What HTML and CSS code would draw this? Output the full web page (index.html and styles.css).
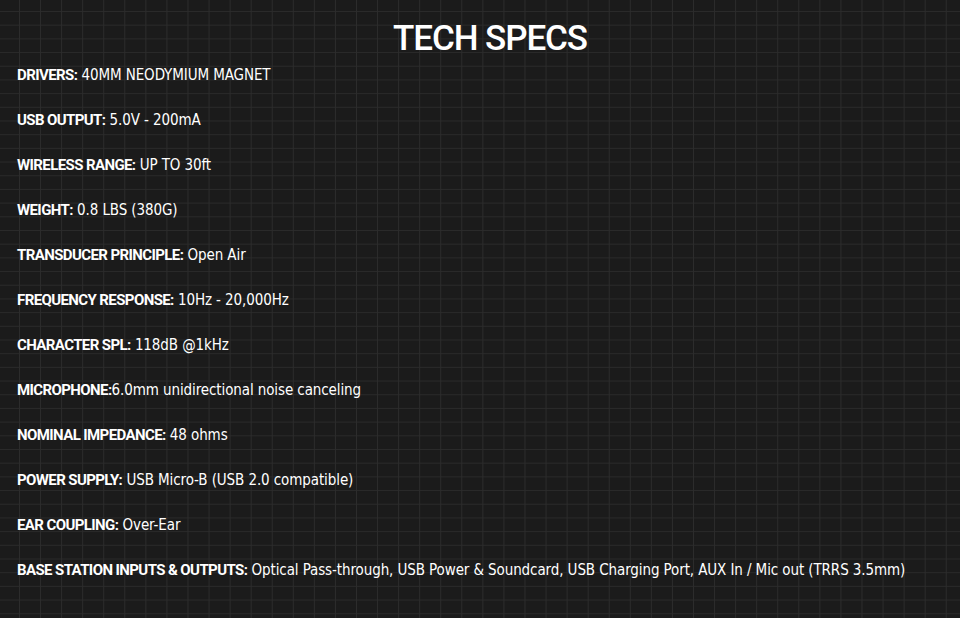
FILE: index.html
```html
<!DOCTYPE html>
<html>
<head>
<meta charset="utf-8">
<link rel="stylesheet" href="styles.css">
</head>
<body>
<main class="specs">
  <h1 class="title">TECH SPECS</h1>
  <ul class="list">
    <li><b>DRIVERS:</b> 40MM NEODYMIUM MAGNET</li>
    <li><b>USB OUTPUT:</b> 5.0V - 200mA</li>
    <li><b>WIRELESS RANGE:</b> UP TO 30ft</li>
    <li><b>WEIGHT:</b> 0.8 LBS (380G)</li>
    <li><b>TRANSDUCER PRINCIPLE:</b> Open Air</li>
    <li><b>FREQUENCY RESPONSE:</b> 10Hz - 20,000Hz</li>
    <li><b>CHARACTER SPL:</b> 118dB @1kHz</li>
    <li><b>MICROPHONE:</b>6.0mm unidirectional noise canceling</li>
    <li><b>NOMINAL IMPEDANCE:</b> 48 ohms</li>
    <li><b>POWER SUPPLY:</b> USB Micro-B (USB 2.0 compatible)</li>
    <li><b>EAR COUPLING:</b> Over-Ear</li>
    <li><b>BASE STATION INPUTS &amp; OUTPUTS:</b> Optical Pass-through, USB Power &amp; Soundcard, USB Charging Port, AUX In / Mic out (TRRS 3.5mm)</li>
  </ul>
</main>
</body>
</html>
```
FILE: styles.css
```css
html, body {
  margin: 0;
  padding: 0;
}
body {
  width: 960px;
  height: 618px;
  overflow: hidden;
  background-color: #1b1b1b;
  background-image:
    linear-gradient(to right, #2c2c2c 0, #2c2c2c 1px, transparent 1px),
    linear-gradient(to bottom, #2a2a2a 0, #2a2a2a 1px, transparent 1px);
  background-size: 21.07px 13.7px;
  background-position: 19px 11px;
  color: #ffffff;
  font-family: "DejaVu Sans Condensed", "DejaVu Sans", sans-serif;
}
.specs {
  padding: 0 17px;
}
.title {
  margin: 0;
  padding-top: 19px;
  padding-bottom: 7px;
  padding-left: 20px;
  text-align: center;
  font-family: Roboto, "DejaVu Sans Condensed", sans-serif;
  font-size: 35px;
  line-height: 40px;
  font-weight: 500;
  letter-spacing: -1.1px;
}
.list {
  list-style: none;
  margin: 0;
  padding: 0;
  display: flex;
  flex-direction: column;
  gap: 27px;
}
.list li {
  font-size: 15px;
  line-height: 18px;
  white-space: nowrap;
  letter-spacing: -0.1px;
}
.list b {
  font-family: Roboto, "DejaVu Sans Condensed", sans-serif;
  font-weight: bold;
  letter-spacing: -0.6px;
}
```
